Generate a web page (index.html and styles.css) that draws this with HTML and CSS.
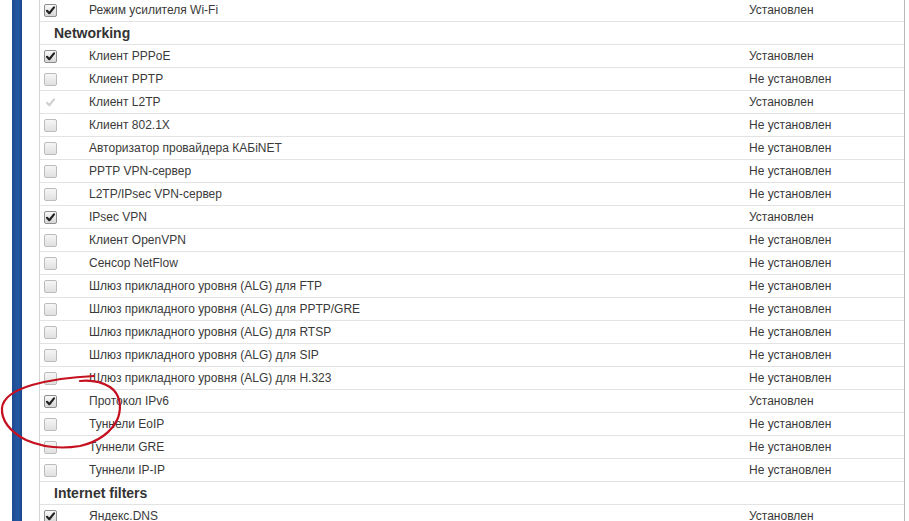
FILE: index.html
```html
<!DOCTYPE html>
<html lang="ru">
<head>
<meta charset="utf-8">
<title>Компоненты</title>
<link rel="stylesheet" href="styles.css">
</head>
<body>
<div class="page">
  <div class="sidebar"></div>
  <div class="table">
    <div class="row"><span class="cb"><span class="box on"><svg viewBox="0 0 11 11"><path d="M2 5.8 L4.3 8.2 L9 2.4" /></svg></span></span><span class="name">Режим усилителя Wi-Fi</span><span class="status">Установлен</span></div>
    <div class="row head"><span class="title">Networking</span></div>
    <div class="row"><span class="cb"><span class="box on"><svg viewBox="0 0 11 11"><path d="M2 5.8 L4.3 8.2 L9 2.4" /></svg></span></span><span class="name">Клиент PPPoE</span><span class="status">Установлен</span></div>
    <div class="row"><span class="cb"><span class="box"></span></span><span class="name">Клиент PPTP</span><span class="status">Не установлен</span></div>
    <div class="row"><span class="cb"><span class="box dis"><svg viewBox="0 0 11 11"><path d="M2 5.8 L4.3 8.2 L9 2.4" /></svg></span></span><span class="name">Клиент L2TP</span><span class="status">Установлен</span></div>
    <div class="row"><span class="cb"><span class="box"></span></span><span class="name">Клиент 802.1X</span><span class="status">Не установлен</span></div>
    <div class="row"><span class="cb"><span class="box"></span></span><span class="name">Авторизатор провайдера КАБiNET</span><span class="status">Не установлен</span></div>
    <div class="row"><span class="cb"><span class="box"></span></span><span class="name">PPTP VPN-сервер</span><span class="status">Не установлен</span></div>
    <div class="row"><span class="cb"><span class="box"></span></span><span class="name">L2TP/IPsec VPN-сервер</span><span class="status">Не установлен</span></div>
    <div class="row"><span class="cb"><span class="box on"><svg viewBox="0 0 11 11"><path d="M2 5.8 L4.3 8.2 L9 2.4" /></svg></span></span><span class="name">IPsec VPN</span><span class="status">Установлен</span></div>
    <div class="row"><span class="cb"><span class="box"></span></span><span class="name">Клиент OpenVPN</span><span class="status">Не установлен</span></div>
    <div class="row"><span class="cb"><span class="box"></span></span><span class="name">Сенсор NetFlow</span><span class="status">Не установлен</span></div>
    <div class="row"><span class="cb"><span class="box"></span></span><span class="name">Шлюз прикладного уровня (ALG) для FTP</span><span class="status">Не установлен</span></div>
    <div class="row"><span class="cb"><span class="box"></span></span><span class="name">Шлюз прикладного уровня (ALG) для PPTP/GRE</span><span class="status">Не установлен</span></div>
    <div class="row"><span class="cb"><span class="box"></span></span><span class="name">Шлюз прикладного уровня (ALG) для RTSP</span><span class="status">Не установлен</span></div>
    <div class="row"><span class="cb"><span class="box"></span></span><span class="name">Шлюз прикладного уровня (ALG) для SIP</span><span class="status">Не установлен</span></div>
    <div class="row"><span class="cb"><span class="box"></span></span><span class="name">Шлюз прикладного уровня (ALG) для H.323</span><span class="status">Не установлен</span></div>
    <div class="row"><span class="cb"><span class="box on"><svg viewBox="0 0 11 11"><path d="M2 5.8 L4.3 8.2 L9 2.4" /></svg></span></span><span class="name">Протокол IPv6</span><span class="status">Установлен</span></div>
    <div class="row"><span class="cb"><span class="box"></span></span><span class="name">Туннели EoIP</span><span class="status">Не установлен</span></div>
    <div class="row"><span class="cb"><span class="box"></span></span><span class="name">Туннели GRE</span><span class="status">Не установлен</span></div>
    <div class="row"><span class="cb"><span class="box"></span></span><span class="name">Туннели IP-IP</span><span class="status">Не установлен</span></div>
    <div class="row head"><span class="title">Internet filters</span></div>
    <div class="row"><span class="cb"><span class="box on"><svg viewBox="0 0 11 11"><path d="M2 5.8 L4.3 8.2 L9 2.4" /></svg></span></span><span class="name">Яндекс.DNS</span><span class="status">Установлен</span></div>
  </div>
</div>
<svg class="scribble" width="140" height="90" viewBox="0 368 140 90">
  <path d="M94 376 C72 377 50 380 32 385 C15 390 3 398 2 408 C1 420 10 432 26 440 C42 447 62 449 80 446 C98 442 112 432 118 418 C122 406 120 394 110 387 C100 381 90 380 80 381" />
</svg>
</body>
</html>
```

FILE: styles.css
```css
html, body {
  margin: 0;
  padding: 0;
  background: #fff;
  overflow: hidden;
}

body {
  font-family: "Liberation Sans", Arial, sans-serif;
  font-size: 12px;
  color: #333;
}

.page {
  display: flex;
  align-items: stretch;
  margin-left: 12px;
  margin-top: -1px;
  min-height: 540px;
}

.sidebar {
  width: 10px;
  flex: none;
  background: linear-gradient(to right, #1d4a8f, #2458a4 60%, #1b4789);
}

.table {
  margin-left: 17px;
  width: 864px;
  border-left: 1px solid #d4d4d4;
  border-right: 1px solid #b8b8b8;
}

.row {
  display: grid;
  grid-template-columns: 49px 660px 1fr;
  align-items: center;
  height: 22px;
  border-bottom: 1px solid #e3e3e3;
}

.row.head {
  display: flex;
}

.title {
  padding-left: 14px;
  font-size: 14px;
  font-weight: bold;
  color: #333;
}

.cb {
  padding-left: 4px;
  display: flex;
  align-items: center;
}

.box {
  width: 11px;
  height: 11px;
  border: 1px solid #bcbcbc;
  border-radius: 2px;
  background: linear-gradient(#f6f6f6, #e0e0e0);
  display: flex;
  align-items: center;
  justify-content: center;
}

.box svg {
  width: 11px;
  height: 11px;
  fill: none;
  stroke: #222;
  stroke-width: 2.2;
  stroke-linecap: round;
  stroke-linejoin: round;
}

.box.on {
  border-color: #8e8e8e;
  background: linear-gradient(#fafafa, #d6d6d6);
}

.box.dis {
  border-color: transparent;
  background: none;
}

.box.dis svg {
  stroke: #d0d0d0;
}

.name, .status {
  color: #3a3a3a;
  white-space: nowrap;
}

.scribble {
  position: absolute;
  left: 0;
  top: 368px;
  pointer-events: none;
}

.scribble path {
  fill: none;
  stroke: #c4101f;
  stroke-width: 2.2;
  stroke-linecap: round;
}
```
